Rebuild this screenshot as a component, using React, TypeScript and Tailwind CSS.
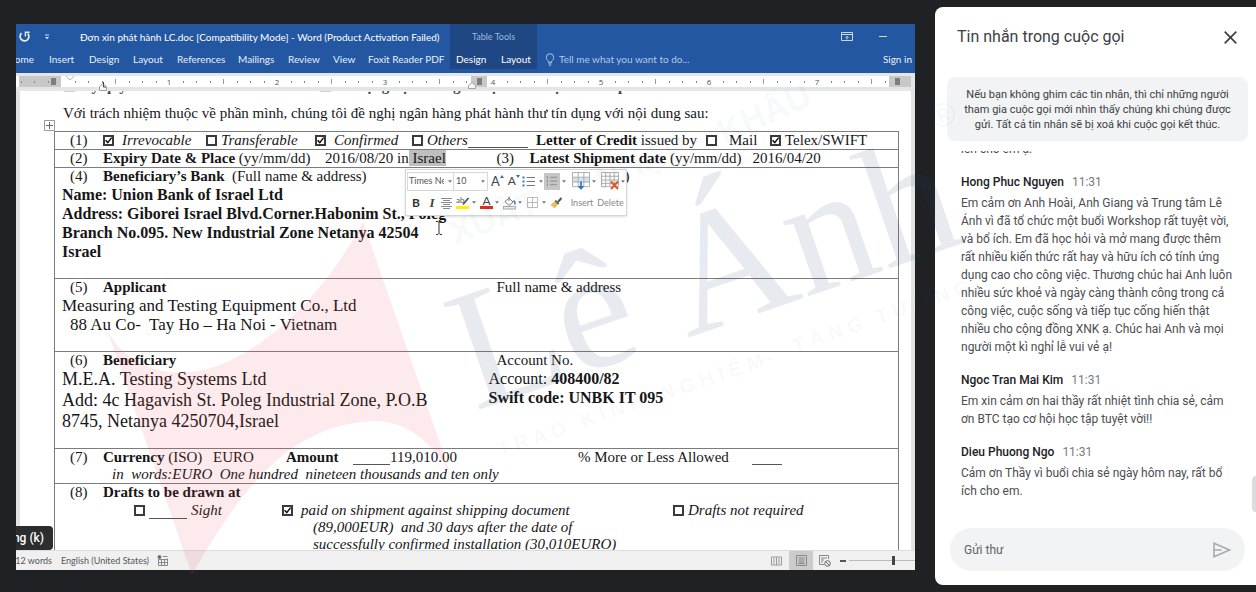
import React from "react";

const RIBBON_TABS = [
  { label: "Insert", width: "w-[40px]" },
  { label: "Design", width: "w-[44px]" },
  { label: "Layout", width: "w-[44px]" },
  { label: "References", width: "w-[61px]" },
  { label: "Mailings", width: "w-[50px]" },
  { label: "Review", width: "w-[45px]" },
  { label: "View", width: "w-[35px]" },
  { label: "Foxit Reader PDF", width: "w-[82px]" },
];

const MESSAGES = [
  {
    name: "Hong Phuc Nguyen",
    time: "11:31",
    lines: [
      "Em cảm ơn Anh Hoài, Anh Giang và Trung tâm Lê",
      "Ánh vì đã tổ chức một buổi Workshop rất tuyệt vời,",
      "và bổ ích. Em đã học hỏi và mở mang được thêm",
      "rất nhiều kiến thức rất hay và hữu ích có tính ứng",
      "dụng cao cho công việc. Thương chúc hai Anh luôn",
      "nhiều sức khoẻ và ngày càng thành công trong cả",
      "công việc, cuộc sống và tiếp tục cống hiến thật",
      "nhiều cho cộng đồng XNK ạ. Chúc hai Anh và mọi",
      "người một kì nghỉ lễ vui vẻ ạ!",
    ],
  },
  {
    name: "Ngoc Tran Mai Kim",
    time: "11:31",
    lines: ["Em xin cảm ơn hai thầy rất nhiệt tình chia sẻ, cảm", "ơn BTC tạo cơ hội học tập tuyệt vời!!"],
  },
  {
    name: "Dieu Phuong Ngo",
    time: "11:31",
    lines: ["Cảm ơn Thầy vì buổi chia sẻ ngày hôm nay, rất bổ", "ích cho em."],
  },
];

function TitleBar() {
  return (
    <header className="flex h-[49px] shrink-0 bg-[#2457a1] font-['Lato','Noto_Sans',sans-serif] text-white">
      <div className="flex w-[434px] shrink-0 flex-col">
        <div className="flex h-[26px] items-center">
          <button aria-label="Redo" className="ml-[3px] w-3">
            <svg viewBox="0 0 12 12" className="size-3" fill="none" stroke="#e6eefb" strokeWidth="1.7">
              <path d="M2.6 2.2A4.4 4.4 0 1 0 8.8 2.6" />
              <path d="M6.4 5.4V1.3H10.6" strokeWidth="1.4" />
            </svg>
          </button>
          <button aria-label="Customize toolbar" className="ml-3 w-2">
            <svg viewBox="0 0 8 8" className="size-2" fill="#dbe6f6">
              <path d="M2 1.5H6V2.5H2ZM2 4H6L4 6.2Z" />
            </svg>
          </button>
          <h1 className="ml-[29px] whitespace-nowrap text-[10px]">
            Đơn xin phát hành LC.doc [Compatibility Mode] - Word (Product Activation Failed)
          </h1>
        </div>
        <nav className="flex h-[18px] items-center whitespace-nowrap text-[10px] text-[#e8effa]">
          <div className="flex w-[33px] shrink-0">
            <div className="flex w-[18px] justify-end overflow-hidden">
              <button>Home</button>
            </div>
          </div>
          {RIBBON_TABS.map((tab) => (
            <button key={tab.label} className={`shrink-0 text-left ${tab.width}`}>
              {tab.label}
            </button>
          ))}
        </nav>
      </div>
      <div className="flex h-[45px] w-[87px] shrink-0 flex-col bg-[#1e4784] text-[10px]">
        <div className="flex h-[26px] items-center justify-center text-[9px] text-[#9db8de]">Table Tools</div>
        <div className="flex h-[18px] items-center pl-[6px]">
          <button className="w-[45px] text-left">Design</button>
          <button>Layout</button>
        </div>
      </div>
      <div className="flex min-w-0 flex-1 flex-col">
        <div className="flex h-[26px] items-center justify-end gap-[25px] pr-[27px]">
          <button aria-label="Ribbon display options">
            <svg viewBox="0 0 12 10" className="h-[10px] w-3" fill="none" stroke="#c9d9f0">
              <path d="M.5 .5H11.5V8.5H.5ZM.5 2.5H11.5M6 7.5V4.5M4.5 5.8L6 4.3L7.5 5.8" />
            </svg>
          </button>
          <button aria-label="Minimize">
            <svg viewBox="0 0 10 10" className="size-[10px]" stroke="#c9d9f0">
              <path d="M1 4.5H9" />
            </svg>
          </button>
        </div>
        <div className="flex h-[18px] items-center pr-[3px] text-[10px]">
          <svg viewBox="0 0 10 14" className="ml-2 h-[13px] w-[10px]" fill="none" stroke="#b9cdea">
            <path d="M3.2 10V8.6C2 7.6 1 6.4 1 4.8A4 4 0 0 1 9 4.8C9 6.4 8 7.6 6.8 8.6V10ZM3.4 11.7H6.6M4 13.2H6" />
          </svg>
          <button className="ml-1 whitespace-nowrap text-[#b4c9e8]">Tell me what you want to do...</button>
          <button className="ml-auto whitespace-nowrap text-[#e8effa]">Sign in</button>
        </div>
      </div>
    </header>
  );
}

function Ruler() {
  const ticks = Array.from({ length: 67 }, (_, i) => i);
  return (
    <div className="h-[18px] shrink-0 overflow-hidden bg-[#e4e5e7] pt-[3px]">
      <svg width="899" height="15" viewBox="16 76 899 15" className="font-['Open_Sans',sans-serif]">
        <rect x="16" y="76" width="895" height="11" fill="#fff" />
        <rect x="19" y="76" width="42" height="11" fill="#c8c8c8" />
        <rect x="471" y="76" width="16" height="11" fill="#c8c8c8" />
        <rect x="889" y="76" width="22" height="11" fill="#c8c8c8" />
        <rect x="51" y="78" width="5" height="7" fill="#7d7d7d" />
        <rect x="477" y="78" width="5" height="7" fill="#7d7d7d" />
        <rect x="895" y="78" width="5" height="7" fill="#7d7d7d" />
        {ticks.map((i) => {
          const x = Math.round(61 + (i - 3) * 13.5);
          const step = (i - 3 + 64) % 8;
          if (i === 3 || i === 34 || i === 65 || x > 911) return null;
          if (step === 0)
            return (
              <text key={i} x={x} y="85" fontSize="8" textAnchor="middle" fill="#555">
                {(i - 3) / 8}
              </text>
            );
          return step === 4 ? (
            <rect key={i} x={x} y="79" width="1" height="5" fill="#999" />
          ) : (
            <rect key={i} x={x} y="81" width="1" height="2" fill="#888" />
          );
        })}
        <path d="M66.500 76V77L70 80L73.500 77V76" fill="#fff" stroke="#b5b5b5" />
        <path d="M99.500 90.500V86.500L103 83.500L106.500 86.500V90.500Z" fill="#f6f6f6" stroke="#a2a2a2" />
        <path d="M103.500 82V87H106" fill="none" stroke="#444" />
        <path d="M468.500 88.500V85.500L472 82.500L475.500 85.500V88.500Z" fill="#f6f6f6" stroke="#a2a2a2" />
      </svg>
    </div>
  );
}

function Check({
  label,
  checked = false,
  blank = false,
  className = "",
}: {
  label: string;
  checked?: boolean;
  blank?: boolean;
  className?: string;
}) {
  return (
    <label className={`flex shrink-0 items-center whitespace-nowrap ${className}`}>
      <span className="relative block size-[11px] shrink-0">
        <input
          type="checkbox"
          defaultChecked={checked}
          className="peer block size-[11px] appearance-none border-2 border-[#3a3a3a]"
        />
        <svg
          viewBox="0 0 11 11"
          className="pointer-events-none absolute left-0 top-0 hidden size-[11px] peer-checked:block"
          fill="none"
          stroke="#111"
          strokeWidth="1.5"
        >
          <path d="M2.600 5.200L4.800 7.600L8.600 2.600" />
        </svg>
      </span>
      {blank && <span className="h-4 w-[38px] border-b border-[#555]" />}
      <span>{label}</span>
    </label>
  );
}

function Num({ n }: { n: number }) {
  return <span className="w-[41px] shrink-0 pl-2">({n})</span>;
}

function Caret() {
  return (
    <svg viewBox="0 0 5 3" className="h-[3px] w-1 shrink-0" fill="#777">
      <path d="M0 0H5L2.500 3Z" />
    </svg>
  );
}

function MiniToolbar() {
  return (
    <div
      role="toolbar"
      className="absolute left-[389px] top-[78px] flex h-[47px] w-[222px] border border-[#d5d5d5] bg-white font-['Lato',sans-serif] text-[10px] text-[#555] shadow-sm"
    >
      <div className="flex w-[161px] flex-col">
        <div className="flex h-[22px] items-center">
          <div className="ml-px flex h-[19px] w-[47px] items-center border border-[#d8d8d8] pl-px pr-[2px]">
            <select aria-label="Font" className="mr-1 w-[35px] appearance-none bg-transparent text-[9px]">
              <option>Times New Roman</option>
            </select>
            <Caret />
          </div>
          <div className="flex h-[19px] w-[34px] items-center border border-l-0 border-[#d8d8d8] pl-[2px] pr-[2px]">
            <select aria-label="Font size" className="w-[25px] appearance-none bg-transparent text-[9px]">
              <option>10</option>
            </select>
            <Caret />
          </div>
          <button aria-label="Grow font" className="ml-[3px] flex items-start text-[13px] leading-4 text-[#444]">
            A
            <svg viewBox="0 0 4 4" className="mt-[2px] size-1" fill="#3b6ea5">
              <path d="M0 3L2 0L4 3Z" />
            </svg>
          </button>
          <button aria-label="Shrink font" className="ml-1 flex items-start text-[12px] leading-4 text-[#444]">
            A
            <svg viewBox="0 0 4 4" className="mt-[2px] size-1" fill="#3b6ea5">
              <path d="M0 0H4L2 3Z" />
            </svg>
          </button>
          <button aria-label="Bullets" className="ml-[2px] flex items-center gap-1">
            <svg viewBox="0 0 13 13" className="size-[13px]" stroke="#777">
              <path d="M4.500 2.500H13M4.500 6.500H13M4.500 10.500H13" />
              <path d="M.500 2.500H2.500M.500 6.500H2.500M.500 10.500H2.500" stroke="#3b78b8" strokeWidth="2" />
            </svg>
            <Caret />
          </button>
          <button aria-label="Numbering" className="ml-px flex items-center gap-[2px]">
            <span className="flex h-[17px] w-4 items-center justify-center bg-[#c6c6c6]">
              <svg viewBox="0 0 13 13" className="size-3" stroke="#888">
                <path d="M4.500 2.500H12M4.500 6.500H12M4.500 10.500H12" />
                <path d="M1.500 1V4M1.500 5V8M1.500 9V12" stroke="#7391b0" />
              </svg>
            </span>
            <Caret />
          </button>
        </div>
        <div className="flex h-[21px] items-center gap-1 pl-[6px]">
          <button className="w-[11px] text-left text-[12px] font-bold text-[#333]">B</button>
          <button className="w-[10px] font-['Liberation_Serif',serif] text-[13px] font-bold italic text-[#444]">
            I
          </button>
          <button aria-label="Center">
            <svg viewBox="0 0 11 12" className="h-3 w-[11px]" stroke="#8a8a8a">
              <path d="M0 1.500H11M2 3.500H9M0 5.500H11M2 7.500H9M0 9.500H11M2 11.500H9" />
            </svg>
          </button>
          <button aria-label="Highlight" className="flex items-center gap-[2px]">
            <svg viewBox="0 0 14 14" className="size-[14px]">
              <text x="0" y="7" fontSize="8" fill="#555">
                ab
              </text>
              <path d="M12.500 2L7 8.500" stroke="#555" strokeWidth="1.800" />
              <rect x="0" y="10" width="13" height="3" fill="#fdf100" />
            </svg>
            <Caret />
          </button>
          <button aria-label="Font color" className="flex items-center gap-[2px]">
            <svg viewBox="0 0 13 14" className="h-[14px] w-[13px]">
              <text x="2.500" y="9" fontSize="12" fill="#444">
                A
              </text>
              <rect x="0" y="10" width="13" height="3" fill="#e02b1d" />
            </svg>
            <Caret />
          </button>
          <button aria-label="Shading" className="flex items-center gap-[2px]">
            <svg viewBox="0 0 13 14" className="h-[14px] w-[13px]" fill="none" stroke="#777">
              <path d="M2 5.500L6 2L10 6L6 9.500ZM6 5V.500" />
              <path d="M10.500 4.500C12.500 6 12.500 7 11.500 8.500" stroke="#4a86b8" strokeWidth="1.600" />
              <rect x=".500" y="10.500" width="12" height="2.500" stroke="#aaa" fill="#eee" />
            </svg>
            <Caret />
          </button>
          <button aria-label="Borders" className="ml-px flex items-center gap-1">
            <svg viewBox="0 0 12 12" className="size-[11px]" fill="none" stroke="#b5b5b5">
              <path d="M.500 .500H11.500V11.500H.500ZM6 .500V11.500M.500 6H11.500" />
            </svg>
            <Caret />
          </button>
          <button aria-label="Format painter">
            <svg viewBox="0 0 12 12" className="size-3">
              <path d="M6 3L9 6.500L4.500 11.500L.500 8Z" fill="#ecbd5b" />
              <path d="M5.800 3L9.300 6.500L8 7.500L4.800 4Z" fill="#555" />
              <path d="M8 5L11.500 1" stroke="#555" strokeWidth="2" />
            </svg>
          </button>
        </div>
      </div>
      <button className="flex w-[30px] flex-col items-center text-[9px] text-[#888]">
        <span className="flex h-[22px] items-center gap-[2px] pl-1">
          <svg viewBox="0 0 19 19" className="size-[18px]" fill="none" stroke="#aaa">
            <rect x=".500" y="6" width="18" height="5" fill="#cfe3f5" stroke="none" />
            <path d="M.500 .500H18.500V15.500H.500ZM6.500 .500V15.500M12.500 .500V15.500M.500 5.500H18.500M.500 10.500H18.500" />
            <path d="M9.500 10V17M7 15L9.500 17.500L12 15" stroke="#2d77b8" strokeWidth="1.800" />
          </svg>
          <Caret />
        </span>
        <span className="leading-[21px]">Insert</span>
      </button>
      <button className="flex w-[27px] flex-col items-center text-[9px] text-[#888]">
        <span className="flex h-[22px] items-center gap-[2px] pl-1">
          <svg viewBox="0 0 19 19" className="size-[18px]" fill="none" stroke="#aaa">
            <path d="M.500 .500H18.500V15.500H.500ZM5 .500V15.500M9.500 .500V15.500M14 .500V15.500M.500 4.500H18.500M.500 8.500H18.500M.500 12H18.500" />
            <path d="M10.500 10L18 18M18 10L10.500 18" stroke="#dd5a2b" strokeWidth="2.200" />
          </svg>
          <Caret />
        </span>
        <span className="leading-[21px]">Delete</span>
      </button>
    </div>
  );
}

function LcForm() {
  const row = "border border-[#7c7c7c] p-0 align-top";
  const left = "border-y border-l border-[#7c7c7c] p-0 align-top";
  const right = "border-y border-r border-[#7c7c7c] p-0 align-top";
  return (
    <table className="w-full table-fixed border-collapse whitespace-nowrap text-[15px] leading-[17px]">
      <colgroup>
        <col className="w-[434px]" />
        <col />
      </colgroup>
      <tbody>
        <tr className="h-[18px]">
          <td className={row} colSpan={2}>
            <div className="flex h-[17px] items-center pl-[7px]">
              <Num n={1} />
              <Check label="Irrevocable" checked className="w-[103px] gap-2 italic" />
              <Check label="Transferable" className="w-[109px] gap-1 italic" />
              <Check label="Confirmed" checked className="w-[97px] gap-2 italic" />
              <Check label="Others" className="gap-1 italic" />
              <span className="mr-2 h-[15px] flex-1 border-b border-[#555]" />
              <span className="w-[170px] shrink-0">
                <b>Letter of Credit</b> issued by
              </span>
              <Check label="Mail" className="w-[64px] gap-3" />
              <Check label="Telex/SWIFT" checked className="w-[128px] gap-1" />
            </div>
          </td>
        </tr>
        <tr className="h-[18px]">
          <td className={left}>
            <div className="flex h-[17px] items-center pl-[7px]">
              <Num n={2} />
              <span className="w-[222px] shrink-0">
                <b>Expiry Date &amp; Place</b> (yy/mm/dd)
              </span>
              <span className="whitespace-pre">
                2016/08/20 in<mark className="bg-[#bfbfbf] text-inherit"> Israel</mark>
              </span>
            </div>
          </td>
          <td className={right}>
            <div className="flex h-[17px] items-center">
              <span className="w-[41px] shrink-0 pl-2">(3)</span>
              <span className="w-[223px] shrink-0">
                <b>Latest Shipment date</b> (yy/mm/dd)
              </span>
              <span>2016/04/20</span>
            </div>
          </td>
        </tr>
        <tr className="h-[111px]">
          <td className={left}>
            <div className="flex pl-[7px]">
              <Num n={4} />
              <span className="whitespace-pre">
                <b>Beneficiary’s Bank </b> (Full name &amp; address)
              </span>
            </div>
            <div className="pl-[7px] text-[16px] font-bold leading-[19px]">
              <p>Name: Union Bank of Israel Ltd</p>
              <p>Address: Giborei Israel Blvd.Corner.Habonim St., Poleg</p>
              <p>Branch No.095. New Industrial Zone Netanya 42504</p>
              <p>Israel</p>
            </div>
          </td>
          <td className={right}>
            <p className="pl-[136px]">)</p>
          </td>
        </tr>
        <tr className="h-[73px]">
          <td className={left}>
            <div className="flex pl-[7px]">
              <Num n={5} />
              <b>Applicant</b>
            </div>
            <div className="whitespace-pre pl-[7px] text-[17px] leading-[19px]">
              <p>Measuring and Testing Equipment Co., Ltd</p>
              <p className="pl-2">88 Au Co-  Tay Ho – Ha Noi - Vietnam</p>
            </div>
          </td>
          <td className={right}>
            <p className="pl-2">Full name &amp; address</p>
          </td>
        </tr>
        <tr className="h-[97px]">
          <td className={left}>
            <div className="flex pl-[7px]">
              <Num n={6} />
              <b>Beneficiary</b>
            </div>
            <div className="pl-[7px] text-[18px] leading-[21px]">
              <p>M.E.A. Testing Systems Ltd</p>
              <p>Add: 4c Hagavish St. Poleg Industrial Zone, P.O.B</p>
              <p>8745, Netanya 4250704,Israel</p>
            </div>
          </td>
          <td className={right}>
            <p className="pl-2">Account No.</p>
            <p className="text-[16px] leading-[19px]">
              Account: <b>408400/82</b>
            </p>
            <p className="text-[16px] font-bold leading-[19px]">Swift code: UNBK IT 095</p>
          </td>
        </tr>
        <tr className="h-[35px]">
          <td className={row} colSpan={2}>
            <div className="flex pl-[7px]">
              <Num n={7} />
              <span className="w-[110px] shrink-0">
                <b>Currency</b> (ISO)
              </span>
              <span className="w-[73px] shrink-0">EURO</span>
              <b className="w-[67px] shrink-0">Amount</b>
              <span className="h-4 w-[37px] shrink-0 border-b border-[#555]" />
              <span className="w-[188px] shrink-0">119,010.00</span>
              <span className="w-[174px] shrink-0">% More or Less Allowed</span>
              <span className="h-4 w-[30px] shrink-0 border-b border-[#555]" />
            </div>
            <p className="whitespace-pre pl-[57px] italic">
              in  words:EURO  One hundred  nineteen thousands and ten only
            </p>
          </td>
        </tr>
        <tr className="h-[90px]">
          <td className={row} colSpan={2}>
            <div className="flex pl-[7px]">
              <Num n={8} />
              <b>Drafts to be drawn at</b>
            </div>
            <div className="mt-px flex pl-[79px] italic">
              <Check label="Sight" blank className="w-[148px] gap-1 self-start" />
              <div className="w-[391px] shrink-0">
                <Check label="paid on shipment against shipping document" checked className="gap-2" />
                <p className="whitespace-pre pl-[31px]">(89,000EUR)  and 30 days after the date of</p>
                <p className="pl-[31px]">successfully confirmed installation (30,010EURO)</p>
              </div>
              <Check label="Drafts not required" className="gap-1 self-start" />
            </div>
          </td>
        </tr>
      </tbody>
    </table>
  );
}

function WordDocument() {
  return (
    <div className="relative flex min-h-0 flex-1 overflow-hidden bg-[#e3e3e3] pl-1 pr-1">
      <div className="min-w-0 flex-1 bg-white pl-[34px] pr-3 font-['Liberation_Serif',serif] text-[#161616]">
        <div className="-mt-[14px] flex h-[18px] whitespace-nowrap pl-[9px] text-[15px] font-bold leading-[18px] text-[#444]">
          <span className="w-[256px] shrink-0">☐ Ký quỹ: 100%</span>
          <span>☐ Sử dụng hạn mức giao dịch USD tại VCB cấp cho khi sau</span>
        </div>
        <p className="mt-[7px] h-[29px] whitespace-nowrap pl-[9px] text-[15px] leading-[22px]">
          Với trách nhiệm thuộc về phần mình, chúng tôi đề nghị ngân hàng phát hành thư tín dụng với nội dung sau:
        </p>
        <LcForm />
      </div>
      <svg viewBox="0 0 11 11" className="absolute left-[28px] top-[29px] size-[11px]" fill="#fff" stroke="#999">
        <path d="M.500 .500H10.500V10.500H.500Z" />
        <path d="M5.500 2V9M2 5.500H9" stroke="#666" />
      </svg>
      <MiniToolbar />
      <svg viewBox="0 0 8 14" className="absolute left-[419px] top-[130px] h-[14px] w-2" fill="none" stroke="#333">
        <path d="M1 .500H3L4 1.500L5 .500H7M4 1.500V12.500M1 13.500H3L4 12.500L5 13.500H7" />
      </svg>
      <div className="absolute bottom-0 left-0 flex h-6 w-[37px] items-center justify-end overflow-hidden whitespace-nowrap rounded-r-[4px] bg-[#2d2d2f] pr-[9px] font-[Roboto,sans-serif] text-[12px] font-medium text-white">
        Phương (k)
      </div>
    </div>
  );
}

function StatusBar() {
  return (
    <footer className="flex h-[20px] shrink-0 items-center border-t border-[#ddd] bg-[#f0f0f1] font-['Lato',sans-serif] text-[9px] text-[#555]">
      <span className="flex w-9 justify-end overflow-hidden whitespace-nowrap">212 words</span>
      <span className="ml-[9px] whitespace-nowrap">English (United States)</span>
      <svg viewBox="0 0 11 11" className="ml-2 size-[11px]" fill="none" stroke="#888">
        <path d="M1.500 4V10.500H10.500V3.500M6 1.500H10.500M4.500 4V10M7.500 4V10M2 4.500H10M2 7.500H10" />
        <circle cx="2.500" cy="2" r="1.600" fill="#555" />
      </svg>
      <div className="ml-auto flex h-full items-center">
        <button aria-label="Read mode">
          <svg viewBox="0 0 11 10" className="h-[10px] w-[11px]" fill="none" stroke="#999">
            <path d="M.500 1H5.500V9H.500ZM5.500 1H10.500V9H5.500ZM2 3H4M2 5H4M2 7H4M7 3H9M7 5H9M7 7H9" />
          </svg>
        </button>
        <button aria-label="Print layout" className="ml-[7px] flex h-full w-6 items-center justify-center bg-[#cbcbcb]">
          <svg viewBox="0 0 11 11" className="size-[11px]" fill="none" stroke="#888">
            <path d="M.500 .500H10.500V10.500H.500ZM2.500 3H8.500M2.500 5H8.500M2.500 7H8.500M2.500 8.500H8.500" />
          </svg>
        </button>
        <button aria-label="Web layout" className="ml-[6px]">
          <svg viewBox="0 0 12 12" className="size-3" fill="none" stroke="#888">
            <path d="M5 9.500H.500V.500H9.500V4M2 3H8M2 5H5M2 7H4" />
            <circle cx="8.500" cy="8.500" r="2.800" stroke="#666" />
            <path d="M6.800 6.800L10.300 10.300" stroke="#666" />
          </svg>
        </button>
        <button aria-label="Zoom out" className="ml-[9px] h-[2px] w-[6px] bg-[#555]" />
        <input
          type="range"
          aria-label="Zoom"
          defaultValue={68}
          className="ml-[3px] h-px w-[66px] appearance-none bg-[#bbb] [&::-webkit-slider-thumb]:h-[9px] [&::-webkit-slider-thumb]:w-[3px] [&::-webkit-slider-thumb]:appearance-none [&::-webkit-slider-thumb]:bg-[#444]"
        />
      </div>
    </footer>
  );
}

function ChatPanel() {
  return (
    <aside className="relative my-[7px] flex w-[321px] shrink-0 flex-col overflow-hidden rounded-l-lg bg-white font-[Roboto,sans-serif]">
      <div className="flex h-[60px] shrink-0 items-center justify-between pl-[22px] pr-[19px]">
        <h2 className="text-[16px] text-[#3c4043]">Tin nhắn trong cuộc gọi</h2>
        <button aria-label="Đóng">
          <svg viewBox="0 0 13 13" className="size-[13px]" stroke="#3c4043" strokeWidth="1.700">
            <path d="M.700 .700L12.300 12.300M12.300 .700L.700 12.300" />
          </svg>
        </button>
      </div>
      <div className="ml-3 mr-2 mt-[10px] h-16 shrink-0 whitespace-nowrap rounded-lg bg-[#f1f3f4] pt-[10px] text-center text-[11px] leading-[15px] text-[#3c4043]">
        <p>Nếu bạn không ghim các tin nhắn, thì chỉ những người</p>
        <p>tham gia cuộc gọi mới nhìn thấy chúng khi chúng được</p>
        <p>gửi. Tất cả tin nhắn sẽ bị xoá khi cuộc gọi kết thúc.</p>
      </div>
      <div className="mt-[10px] flex min-h-0 flex-1 flex-col gap-[15px] overflow-hidden whitespace-nowrap pl-[26px] text-[12px] leading-[18px] text-[#4a4d51]">
        <p className="-mt-[11px] shrink-0">lên cho em ạ.</p>
        {MESSAGES.map((m) => (
          <article key={m.name} className="shrink-0">
            <div className="flex h-[21px] items-start gap-2">
              <h3 className="font-medium text-[#202124]">{m.name}</h3>
              <time className="text-[#777b80]">{m.time}</time>
            </div>
            {m.lines.map((line) => (
              <p key={line}>{line}</p>
            ))}
          </article>
        ))}
      </div>
      <form className="mb-[14px] ml-[15px] mr-[11px] flex h-[43px] shrink-0 items-center rounded-full bg-[#f1f3f4] pl-[14px] pr-[14px]">
        <input
          type="text"
          aria-label="Gửi thư"
          placeholder="Gửi thư"
          className="min-w-0 flex-1 bg-transparent text-[12px] outline-none placeholder:text-[#5f6368]"
        />
        <button type="button" aria-label="Gửi">
          <svg viewBox="0 0 18 16" className="h-4 w-[18px]" fill="none" stroke="#a8abaf" strokeWidth="1.600">
            <path d="M1 1.200L16.500 8L1 14.800ZM1 8H8.500" />
          </svg>
        </button>
      </form>
      <div className="absolute bottom-[73px] right-0 h-9 w-1 rounded-l bg-[#dadce0]" />
    </aside>
  );
}

function Watermark() {
  return (
    <svg
      aria-hidden="true"
      viewBox="0 0 1256 592"
      className="pointer-events-none absolute left-0 top-0 h-[592px] w-[1256px]"
    >
      <path
        fill="#e04450"
        fillOpacity="0.110"
        d="M363 222L450 472C430 440 405 421 375 421C290 423 240 490 192 575L108 332C135 378 190 382 235 358C290 330 335 275 363 222Z"
      />
      <g fill="#284a78" fillOpacity="0.110" fontFamily="Liberation Serif">
        <text transform="translate(475 411) rotate(-19)" fontSize="172">
          Lê Ánh
        </text>
      </g>
      <g fill="#284a78" fillOpacity="0.040" fontFamily="Liberation Sans" fontSize="20" fontWeight="bold">
        <text transform="translate(500 457) rotate(-19)">T R A O</text>
        <text transform="translate(583 428) rotate(-19)">K I N H</text>
        <text transform="translate(663 401) rotate(-19)">N G H I Ệ M</text>
        <text transform="translate(769 365) rotate(-19)">-</text>
        <text transform="translate(795 353) rotate(-19)">T Ặ N G</text>
        <text transform="translate(878 324) rotate(-19)">T Ư Ơ N G</text>
      </g>
      <g fill="#284a78" fillOpacity="0.050" fontFamily="Liberation Sans" fontSize="34" fontWeight="bold">
        <text transform="translate(455 245) rotate(-21)">XUẤT</text>
        <text transform="translate(600 190) rotate(-21)">NHẬP</text>
        <text transform="translate(724 144) rotate(-24)">KHẨU</text>
        <text transform="translate(935 130) rotate(-19)">®</text>
      </g>
    </svg>
  );
}

export default function App() {
  return (
    <div className="relative flex h-screen gap-5 overflow-hidden bg-[#202124]">
      <main className="mb-[22px] ml-4 mt-6 flex min-w-0 flex-1 flex-col overflow-hidden">
        <TitleBar />
        <Ruler />
        <WordDocument />
        <StatusBar />
      </main>
      <ChatPanel />
      <Watermark />
    </div>
  );
}
